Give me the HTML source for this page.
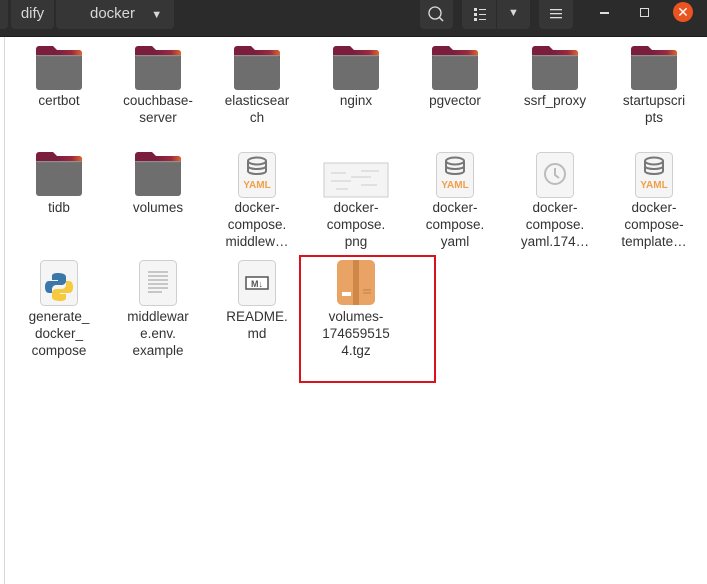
<!DOCTYPE html><html><head><style>
body{margin:0;width:707px;height:584px;background:#fff;position:relative;overflow:hidden;font-family:"Liberation Sans",sans-serif}
.hd{position:absolute;left:0;top:0;width:707px;height:36px;background:#2b2b2b;border-bottom:1px solid #1e1e1e}
.b{position:absolute;top:0;height:29px;background:#363636;border-radius:0 0 4px 4px;color:#d8d8d8;font-size:15px;line-height:27px;text-align:center}
.it{position:absolute;width:96px;text-align:center;font-size:13.5px;line-height:17px;color:#333}
</style></head><body>
<div class="hd">
<div class="b" style="left:0;width:8px;border-radius:0 0 4px 0"></div>
<div class="b" style="left:11px;width:43px">dify</div>
<div class="b" style="left:56px;width:118px;text-align:left;padding-left:34px;box-sizing:border-box">docker <span style="font-size:11px;margin-left:12px">▼</span></div>
<div class="b" style="left:420px;width:33px"><svg width="33" height="29"><circle cx="15" cy="13" r="6" fill="none" stroke="#ddd" stroke-width="1.3"/><line x1="19.5" y1="17.5" x2="23" y2="21" stroke="#ddd" stroke-width="1.5"/></svg></div>
<div class="b" style="left:462px;width:34px;border-radius:0 0 0 4px"><svg width="34" height="29"><g fill="#ddd"><rect x="12" y="8" width="3" height="3"/><rect x="12" y="13" width="3" height="3"/><rect x="12" y="18" width="3" height="3"/><rect x="17" y="9" width="7" height="1"/><rect x="17" y="14" width="7" height="1"/><rect x="17" y="19" width="7" height="1"/></g></svg></div>
<div class="b" style="left:497px;width:33px;border-radius:0 0 4px 0;font-size:11px">▼</div>
<div class="b" style="left:539px;width:34px"><svg width="34" height="29"><g fill="#ddd"><rect x="11" y="9" width="12" height="1.3"/><rect x="11" y="13" width="12" height="1.3"/><rect x="11" y="17" width="12" height="1.3"/></g></svg></div>
<div style="position:absolute;left:600px;top:12px;width:9px;height:1.5px;background:#ddd"></div>
<div style="position:absolute;left:640px;top:8px;width:7px;height:7px;border:1.3px solid #ddd"></div>
<div style="position:absolute;left:673px;top:2px;width:20px;height:20px;border-radius:50%;background:#e95420;color:#fff;font-size:14px;line-height:20px;text-align:center">✕</div>
</div>
<div style="position:absolute;left:4px;top:37px;width:1px;height:547px;background:#d8d8d8"></div>

<svg width="707" height="584" style="position:absolute;left:0;top:0" >
<defs>
<linearGradient id="og" x1="0" x2="1"><stop offset="0" stop-color="#7b1e3e"/><stop offset=".6" stop-color="#9a2a3e"/><stop offset="1" stop-color="#e0642a"/></linearGradient>
<g id="f"><path d="M-23 3 a3 3 0 0 1 3-3 h14 l4 4 h22 a3 3 0 0 1 3 3 v10 h-46z" fill="#7b1e3e"/><path d="M-2 4 h22 a3 3 0 0 1 3 3 v2 h-25z" fill="url(#og)"/><rect x="-23" y="9" width="46" height="35" rx="3" fill="#6e6e6e"/><rect x="-23" y="9" width="46" height="1.2" fill="#8f8f8f"/></g>
<g id="d"><rect x="-18.5" y="0.5" width="37" height="45" rx="4" fill="#f5f5f5" stroke="#cfcfcf"/></g>
<g id="y"><use href="#d"/><ellipse cx="0" cy="9" rx="9" ry="3.5" fill="none" stroke="#777" stroke-width="2"/><path d="M-9 9v10c0 4 18 4 18 0V9M-9 14c0 4 18 4 18 0" fill="none" stroke="#777" stroke-width="2"/><text x="0" y="36" font-size="10" font-weight="bold" text-anchor="middle" fill="#f0a04a" font-family="Liberation Sans">YAML</text></g>
</defs>
<use href="#f" x="59" y="46"/><use href="#f" x="158" y="46"/><use href="#f" x="257" y="46"/><use href="#f" x="356" y="46"/><use href="#f" x="455" y="46"/><use href="#f" x="555" y="46"/><use href="#f" x="654" y="46"/>
<use href="#f" x="59" y="152"/><use href="#f" x="158" y="152"/>
<use href="#y" x="257" y="152"/><use href="#y" x="455" y="152"/><use href="#y" x="654" y="152"/>
<g transform="translate(555,152)"><use href="#d"/><circle cx="0" cy="22" r="10" fill="none" stroke="#bbb" stroke-width="2"/><path d="M0 16v7l4 3" stroke="#bbb" stroke-width="2" fill="none"/></g>
<g transform="translate(356,163)"><rect x="-32" y="0" width="64" height="34" fill="#f4f4f4" stroke="#ccc"/><path d="M-25 10h15M-25 18h20M-5 14h20M5 8h18M5 22h16M-20 26h12" stroke="#ccc"/></g>
<g transform="translate(59,260)"><use href="#d"/><path d="M-1 13c-6 0-6 2-6 4v3h6v1h-9c-3 0-4 3-4 6s1 6 4 6h3v-4c0-2 2-4 4-4h6c2 0 4-2 4-4v-4c0-2-2-4-8-4z" fill="#3b77a8"/><path d="M1 41c6 0 6-2 6-4v-3h-6v-1h9c3 0 4-3 4-6s-1-6-4-6h-3v4c0 2-2 4-4 4h-6c-2 0-4 2-4 4v4c0 2 2 4 8 4z" fill="#f7c93e"/></g>
<g transform="translate(158,260)"><use href="#d"/><path d="M-10 12h20M-10 16h20M-10 20h20M-10 24h20M-10 28h20M-10 32h14" stroke="#999"/></g>
<g transform="translate(257,260)"><use href="#d"/><rect x="-11" y="17" width="22" height="12" fill="#fff" stroke="#555" stroke-width="1.5"/><text x="0" y="27" font-size="9" font-weight="bold" text-anchor="middle" fill="#555" font-family="Liberation Sans">M↓</text></g>
<g transform="translate(356,260)"><rect x="-19" y="0" width="38" height="45" rx="5" fill="#e9a465"/><rect x="-3" y="0" width="6" height="45" fill="#d08848"/><rect x="-14" y="32" width="9" height="4" fill="#fff"/><path d="M7 30h8M7 33h8" stroke="#c07f44"/></g>
<rect x="300" y="256" width="135" height="126" fill="none" stroke="#d9121b" stroke-width="2"/>
</svg>

<div class="it" style="left:11px;top:92px">certbot</div>
<div class="it" style="left:110px;top:92px">couchbase-<br>server</div>
<div class="it" style="left:209px;top:92px">elasticsear<br>ch</div>
<div class="it" style="left:308px;top:92px">nginx</div>
<div class="it" style="left:407px;top:92px">pgvector</div>
<div class="it" style="left:507px;top:92px">ssrf_proxy</div>
<div class="it" style="left:606px;top:92px">startupscri<br>pts</div>
<div class="it" style="left:11px;top:199px">tidb</div>
<div class="it" style="left:110px;top:199px">volumes</div>
<div class="it" style="left:209px;top:199px">docker-<br>compose.<br>middlew…</div>
<div class="it" style="left:308px;top:199px">docker-<br>compose.<br>png</div>
<div class="it" style="left:407px;top:199px">docker-<br>compose.<br>yaml</div>
<div class="it" style="left:507px;top:199px">docker-<br>compose.<br>yaml.174…</div>
<div class="it" style="left:606px;top:199px">docker-<br>compose-<br>template…</div>
<div class="it" style="left:11px;top:308px">generate_<br>docker_<br>compose</div>
<div class="it" style="left:110px;top:308px">middlewar<br>e.env.<br>example</div>
<div class="it" style="left:209px;top:308px">README.<br>md</div>
<div class="it" style="left:308px;top:308px">volumes-<br>174659515<br>4.tgz</div>
</body></html>
